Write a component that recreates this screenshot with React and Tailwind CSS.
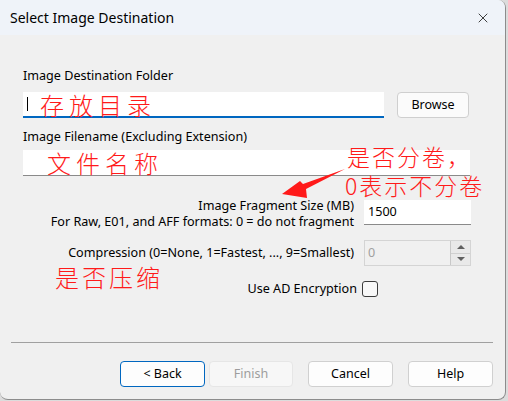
import React from 'react'
import { X } from 'lucide-react'

const ui = "font-['Noto_Sans',sans-serif]"
const red = "font-['Noto_Sans_CJK_SC',sans-serif] text-[#ff1a1a] font-light leading-none"

const Button = ({ children, w = 'w-[85px]', className = '' }) => (
  <button className={`h-[26px] ${w} rounded-[4px] border text-[12.5px] ${className}`}>{children}</button>
)

export default function App() {
  return (
    <div className={`w-[508px] h-[401px] bg-[#dcdcdc] ${ui}`}>
      <div className="relative w-[506px] h-[400px] rounded-tr-[8px] rounded-b-[8px] border-r border-b border-[#8c8c8c] bg-[#f0f0f0] overflow-hidden flex flex-col">
        {/* Title bar */}
        <div className="h-[35px] bg-[#eff3f9] flex items-center justify-between pl-[10px] pr-[14px] shrink-0">
          <span className="text-[14px] text-black">Select Image Destination</span>
          <X className="h-[16px] w-[16px] text-[#222]" strokeWidth={1.3} />
        </div>

        {/* Form */}
        <div className="pl-[23px] pt-[33px] flex flex-col text-[12.6px] text-black">
          <div className="h-[16px] leading-[16px]">Image Destination Folder</div>
          <div className="mt-[8px] flex items-center gap-[13px]">
            <div className="w-[361px] h-[26px] bg-white border-b-2 border-[#0067c0] flex items-center pl-[4px]">
              <div className="w-px h-[14px] bg-black" />
            </div>
            <Button w="w-[72px]" className="border-[#cfcfcf] bg-[#fbfbfb]">Browse</Button>
          </div>
          <div className="mt-[11px] h-[16px] leading-[16px]">Image Filename (Excluding Extension)</div>
          <div className="mt-[5px] w-[447px] h-[26px] bg-white border-b border-[#8a8a8a]" />

          <div className="mt-[22px] flex items-start w-[448px]">
            <div className="w-[331px] text-right leading-[16px] whitespace-nowrap">
              <div>Image Fragment Size (MB)</div>
              <div>For Raw, E01, and AFF formats: 0 = do not fragment</div>
            </div>
            <div className="ml-[10px] mt-[2px] w-[107px] h-[25px] bg-white border-b border-[#8a8a8a] flex items-center pl-[4px]">1500</div>
          </div>

          <div className="mt-[10px] flex items-center w-[448px]">
            <div className="w-[331px] text-right whitespace-nowrap">Compression (0=None, 1=Fastest, ..., 9=Smallest)</div>
            <div className="ml-[10px] w-[107px] h-[26px] border border-[#d4d4d4] bg-[#f0f0f0] flex">
              <div className="flex-1 flex items-center pl-[3px] text-[#a0a0a0]">0</div>
              <div className="w-[20px] flex flex-col border-l border-[#c8c8c8]">
                <div className="flex-1 bg-[#e9e9e9] border-b border-[#d0d0d0] flex items-center justify-center">
                  <div className="w-0 h-0 border-l-[4px] border-r-[4px] border-b-[4px] border-l-transparent border-r-transparent border-b-[#606060]" />
                </div>
                <div className="flex-1 bg-[#e9e9e9] flex items-center justify-center">
                  <div className="w-0 h-0 border-l-[4px] border-r-[4px] border-t-[4px] border-l-transparent border-r-transparent border-t-[#606060]" />
                </div>
              </div>
            </div>
          </div>

          <div className="mt-[14px] flex items-center w-[355px] justify-end gap-[5px]">
            <span>Use AD Encryption</span>
            <div className="w-[16px] h-[16px] rounded-[3px] border border-[#3c3c3c] bg-[#f8f8f8]" />
          </div>
        </div>

        <div className="mt-auto mx-[11px] w-[482px] h-px bg-[#a0a0a0]" />
        <div className="h-[56px] flex items-start pt-[18px] pl-[120px]">
          <Button className="border-[#0067c0] bg-[#fdfdfd] text-black">&lt; Back</Button>
          <Button w="w-[84px]" className="ml-[4px] border-[#e6e6e6] bg-[#f7f7f7] text-[#9d9d9d]">Finish</Button>
          <Button className="ml-[15px] border-[#d0d0d0] bg-[#fdfdfd] text-black">Cancel</Button>
          <Button className="ml-[15px] border-[#d0d0d0] bg-[#fdfdfd] text-black">Help</Button>
        </div>

        {/* Red annotations */}
        <div className={`absolute left-[40px] top-[93px] text-[24px] tracking-[5px] ${red}`}>存放目录</div>
        <div className={`absolute left-[47px] top-[151px] text-[24px] tracking-[5px] ${red}`}>文件名称</div>
        <div className={`absolute left-[347px] top-[145px] text-[23px] tracking-[2px] ${red}`}>是否分卷，</div>
        <div className={`absolute left-[345px] top-[174px] text-[23px] tracking-[2px] ${red}`}>0表示不分卷</div>
        <div className={`absolute left-[55px] top-[265px] text-[24px] tracking-[3px] ${red}`}>是否压缩</div>
        <svg className="absolute left-0 top-0 pointer-events-none" width="506" height="400">
          <polygon points="282,194 300,181 303,184 345,169 306,189 307,198" fill="#ff1a1a" />
        </svg>
      </div>
    </div>
  )
}
